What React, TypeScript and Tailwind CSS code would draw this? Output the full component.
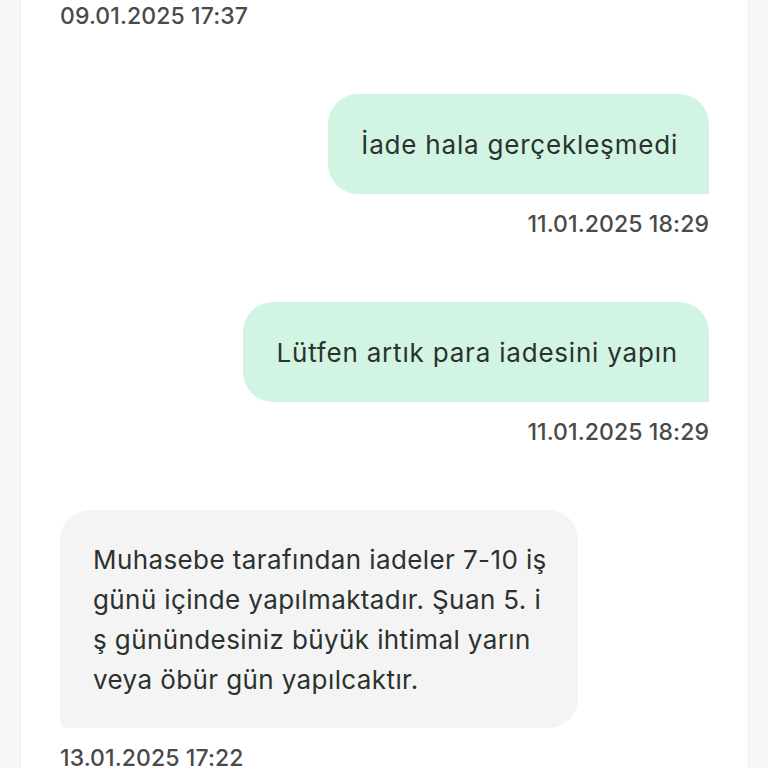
import React from 'react';

interface Message {
  side: 'me' | 'them';
  lines: string[];
  time: string;
}

const messages: Message[] = [
  { side: 'me', lines: ['İade hala gerçekleşmedi'], time: '11.01.2025 18:29' },
  { side: 'me', lines: ['Lütfen artık para iadesini yapın'], time: '11.01.2025 18:29' },
  {
    side: 'them',
    lines: [
      'Muhasebe tarafından iadeler 7-10 iş',
      'günü içinde yapılmaktadır. Şuan 5. i',
      'ş günündesiniz büyük ihtimal yarın',
      'veya öbür gün yapılcaktır.',
    ],
    time: '13.01.2025 17:22',
  },
];

const Stamp: React.FC<{ time: string; right?: boolean }> = ({ time, right }) => (
  <div
    className={`text-[23px] leading-[28px] font-medium text-[#4a4a4a] tracking-[0.1px] ${
      right ? 'text-right' : 'text-left'
    }`}
  >
    {time}
  </div>
);

const App: React.FC = () => {
  return (
    <div
      className="flex h-screen w-full overflow-hidden bg-[#f8f8f8]"
      style={{ fontFamily: 'Inter, "Noto Sans", sans-serif' }}
    >
      <div className="w-5 shrink-0" />
      <main className="flex-1 bg-white border-x border-[#ececec] px-[39px] pt-[2px] flex flex-col">
        <Stamp time="09.01.2025 17:37" />
        {messages.map((m, i) => (
          <div key={i} className="mt-16 flex flex-col">
            {m.side === 'me' ? (
              <div className="self-end bg-[#d1f5e2] rounded-t-[30px] rounded-bl-[30px] pl-[33px] pr-[31px] pt-[33px] pb-[31px] text-[26px] leading-[36px] tracking-[0.8px] text-[#2b322e]">
                {m.lines[0]}
              </div>
            ) : (
              <div className="self-start w-[518px] bg-[#f4f4f4] rounded-t-[30px] rounded-br-[30px] rounded-bl-[6px] pl-[33px] pr-4 pt-[30px] pb-[28px] text-[26px] leading-[40px] tracking-[0.4px] text-[#2b322e]">
                {m.lines.map((l, j) => (
                  <span key={j} className="block whitespace-nowrap">
                    {l}
                  </span>
                ))}
              </div>
            )}
            <div className="mt-4">
              <Stamp time={m.time} right={m.side === 'me'} />
            </div>
          </div>
        ))}
      </main>
      <div className="w-[19px] shrink-0" />
    </div>
  );
};

export default App;
